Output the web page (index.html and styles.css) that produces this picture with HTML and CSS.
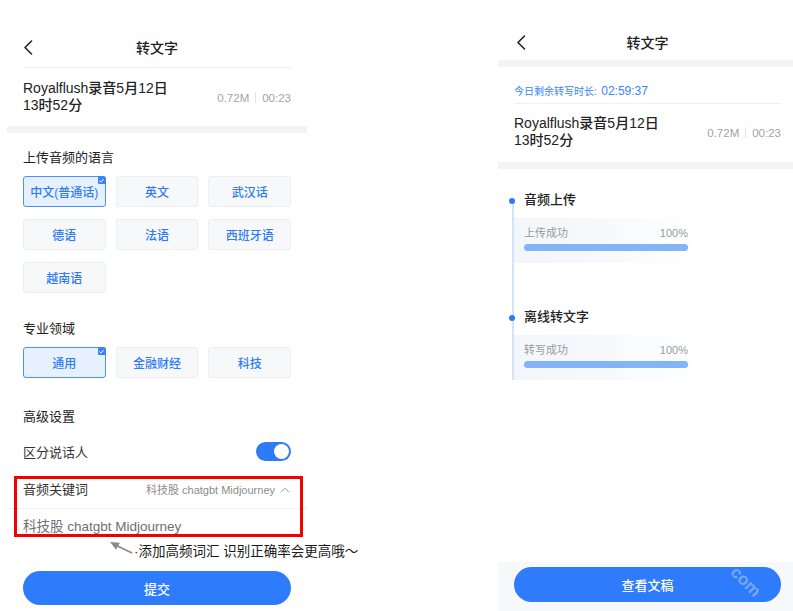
FILE: index.html
```html
<!DOCTYPE html>
<html lang="zh-CN">
<head>
<meta charset="utf-8">
<title>转文字</title>
<link rel="stylesheet" href="styles.css">
</head>
<body>
<div class="screens">
  <div class="phone phone-left">
    <header class="nav nav-left">
      <svg class="back" width="10" height="15" viewBox="0 0 10 15"><path d="M8.5 1 L2 7.5 L8.5 14" fill="none" stroke="#222" stroke-width="1.6" stroke-linecap="round" stroke-linejoin="round"/></svg>
      <span class="nav-title">转文字</span>
    </header>
    <div class="file">
      <div class="file-name">Royalflush录音5月12日<br>13时52分</div>
      <div class="file-meta"><span>0.72M</span><i class="sep"></i><span>00:23</span></div>
    </div>
    <div class="band"></div>

    <section class="sec sec-lang">
      <h3 class="sec-title">上传音频的语言</h3>
      <div class="opts">
        <div class="opt opt-on">中文(普通话)<span class="tick"><svg width="7" height="7" viewBox="0 0 7 7"><path d="M1.3 3.6 L2.9 5 L5.7 2" fill="none" stroke="#fff" stroke-width="1"/></svg></span></div>
        <div class="opt">英文</div>
        <div class="opt">武汉话</div>
        <div class="opt">德语</div>
        <div class="opt">法语</div>
        <div class="opt">西班牙语</div>
        <div class="opt">越南语</div>
      </div>
    </section>

    <section class="sec sec-domain">
      <h3 class="sec-title">专业领域</h3>
      <div class="opts">
        <div class="opt opt-on">通用<span class="tick"><svg width="7" height="7" viewBox="0 0 7 7"><path d="M1.3 3.6 L2.9 5 L5.7 2" fill="none" stroke="#fff" stroke-width="1"/></svg></span></div>
        <div class="opt">金融财经</div>
        <div class="opt">科技</div>
      </div>
    </section>

    <section class="sec sec-adv">
      <h3 class="sec-title">高级设置</h3>
      <div class="row-switch">
        <span>区分说话人</span>
        <span class="switch"><span class="knob"></span></span>
      </div>
    </section>

    <div class="keywords">
      <div class="kw-head">
        <span class="kw-label">音频关键词</span>
        <span class="kw-value">科技股 chatgbt Midjourney
          <svg class="caret" width="10" height="6" viewBox="0 0 10 6"><path d="M1 5.2 L5 1.2 L9 5.2" fill="none" stroke="#9a9a9a" stroke-width="1"/></svg>
        </span>
      </div>
      <div class="kw-input">科技股 chatgbt Midjourney</div>
      <div class="highlight"></div>
    </div>

    <div class="tip">
      <svg class="tip-arrow" width="26" height="14" viewBox="0 0 26 14"><path d="M9 5.7 L24 13" stroke="#8a8a8a" stroke-width="1.6"/><polygon points="2,2 11.9,2.7 8.1,9.7" fill="#8a8a8a"/></svg>
      <span class="tip-text">·添加高频词汇 识别正确率会更高哦～</span>
    </div>

    <button class="btn-primary btn-submit">提交</button>
  </div>

  <div class="phone phone-right">
    <header class="nav nav-right">
      <svg class="back" width="10" height="15" viewBox="0 0 10 15"><path d="M8.5 1 L2 7.5 L8.5 14" fill="none" stroke="#222" stroke-width="1.6" stroke-linecap="round" stroke-linejoin="round"/></svg>
      <span class="nav-title">转文字</span>
    </header>
    <div class="band"></div>
    <div class="quota"><span class="q-label">今日剩余转写时长:</span> <span class="q-time">02:59:37</span></div>
    <div class="file file-r">
      <div class="file-name">Royalflush录音5月12日<br>13时52分</div>
      <div class="file-meta"><span>0.72M</span><i class="sep"></i><span>00:23</span></div>
    </div>
    <div class="band"></div>

    <div class="timeline">
      <div class="step">
        <div class="step-title">音频上传</div>
        <div class="step-card">
          <div class="step-info"><span>上传成功</span><span>100%</span></div>
          <div class="bar"><div class="bar-fill" style="width:100%"></div></div>
        </div>
      </div>
      <div class="step step-2">
        <div class="step-title">离线转文字</div>
        <div class="step-card">
          <div class="step-info"><span>转写成功</span><span>100%</span></div>
          <div class="bar"><div class="bar-fill" style="width:100%"></div></div>
        </div>
      </div>
    </div>

    <footer class="footer">
      <button class="btn-primary btn-view">查看文稿<span class="watermark">com</span></button>
    </footer>
  </div>
</div>
</body>
</html>
```

FILE: styles.css
```css
* { box-sizing: border-box; }
html, body { margin: 0; padding: 0; background: #fff; }
body {
  width: 793px;
  height: 611px;
  overflow: hidden;
  font-family: "Liberation Sans", "Noto Sans CJK SC", sans-serif;
  color: #222;
}
.screens {
  display: flex;
  align-items: flex-start;
}
.phone {
  display: flex;
  flex-direction: column;
  height: 611px;
}
.phone-left {
  width: 300px;
  margin-left: 7px;
}
.phone-right {
  width: 295px;
  margin-left: 191px;
}

/* nav */
.nav {
  position: relative;
  display: flex;
  align-items: center;
  justify-content: center;
}
.nav .back {
  position: absolute;
  left: 0;
  top: 50%;
  margin-top: -7px;
}
.nav-title {
  font-size: 14px;
  font-weight: 500;
  color: #222;
}
.nav-left {
  margin: 26px 16px 0;
  height: 42px;
  border-bottom: 1px solid #f0f0f0;
}
.nav-right {
  margin: 23px 12px 0 16px;
  height: 37px;
}
.nav-right .back { left: 2px; }

/* file row */
.file {
  display: flex;
  align-items: center;
  justify-content: space-between;
  padding: 12px 16px 12px;
}
.file-name {
  font-size: 14px;
  line-height: 17px;
  color: #222;
  font-weight: 500;
}
.file-meta {
  display: flex;
  align-items: center;
  font-size: 11.5px;
  color: #a3a3a3;
  padding-top: 1px;
}
.file-meta .sep {
  display: inline-block;
  width: 1px;
  height: 11px;
  background: #e3e3e3;
  margin: 0 6px;
}
.file-r {
  padding: 11px 12px 13px 16px;
}
.band {
  height: 7px;
  background: #f4f4f4;
}

/* sections */
.sec { padding: 0 16px; }
.sec-title {
  margin: 0 0 9px;
  font-size: 13px;
  line-height: 18px;
  font-weight: 400;
  color: #222;
}
.sec-lang { padding-top: 16px; }
.sec-domain { padding-top: 27px; }
.sec-adv { padding-top: 30px; }
.sec-adv .sec-title { margin-bottom: 13px; }

.opts {
  display: grid;
  grid-template-columns: repeat(3, 1fr);
  column-gap: 10px;
  row-gap: 12px;
}
.opt {
  position: relative;
  height: 31px;
  display: flex;
  align-items: center;
  justify-content: center;
  background: #f7f8fa;
  border: 1px solid #eceef1;
  border-radius: 3px;
  font-size: 12px;
  font-weight: 500;
  color: #2f7bf5;
}
.opt-on {
  background: #e7f0fe;
  border-color: #4d8ff7;
}
.tick {
  position: absolute;
  top: -1px;
  right: -1px;
  width: 8px;
  height: 8px;
  background: #3a84f6;
  border-radius: 0 3px 0 1px;
  display: flex;
  align-items: center;
  justify-content: center;
}

.row-switch {
  display: flex;
  align-items: center;
  justify-content: space-between;
  height: 24px;
  font-size: 13px;
  color: #333;
}
.switch {
  position: relative;
  width: 35px;
  height: 19px;
  border-radius: 10px;
  background: #2f7bf6;
}
.knob {
  position: absolute;
  right: 2px;
  top: 2px;
  width: 15px;
  height: 15px;
  border-radius: 50%;
  background: #fff;
}

/* keywords */
.keywords {
  position: relative;
  margin-top: 14px;
}
.kw-head {
  display: flex;
  justify-content: space-between;
  align-items: flex-start;
  height: 32px;
  padding: 4px 16px 0;
  border-bottom: 1px solid #f2f2f2;
}
.kw-label {
  font-size: 13px;
  line-height: 18px;
  color: #333;
}
.kw-value {
  display: flex;
  align-items: center;
  font-size: 11px;
  line-height: 18px;
  color: #8c8c8c;
}
.caret { margin-left: 5px; margin-right: 1px; }
.kw-input {
  padding: 9px 16px 0;
  height: 27px;
  font-size: 13.5px;
  line-height: 18px;
  color: #707070;
}
.highlight {
  position: absolute;
  left: 7px;
  right: 4px;
  top: -1px;
  bottom: -1px;
  border: 3px solid #f40000;
}

/* tip */
.tip {
  display: flex;
  align-items: flex-start;
  margin-top: 7px;
  padding-left: 101px;
  height: 18px;
  white-space: nowrap;
}
.tip-arrow { margin-top: -3px; flex-shrink: 0; }
.tip-text {
  font-size: 13.5px;
  line-height: 18px;
  color: #1a1a1a;
}

.btn-primary {
  position: relative;
  display: flex;
  align-items: center;
  justify-content: center;
  border: 0;
  border-radius: 18px;
  background: #2e7bfb;
  color: #fff;
  font-family: inherit;
  font-size: 13px;
  font-weight: 500;
}
.btn-submit {
  margin: 10px 16px 0;
  height: 34px;
}

/* right panel */
.quota {
  margin: 0 12px 0 16px;
  padding: 15px 0 5px;
  border-bottom: 1px solid #f0f0f0;
  color: #3a86f6;
  line-height: 16px;
  height: 37px;
}
.q-label { font-size: 10px; }
.q-time { font-size: 12px; }

.timeline {
  position: relative;
  margin: 22px 0 0 14px;
  padding-left: 2px;
}
.timeline::before {
  content: "";
  position: absolute;
  left: 0;
  top: 9px;
  bottom: 0;
  width: 2px;
  background: #d3e3fc;
}
.step-title {
  position: relative;
  padding-left: 10px;
  font-size: 13px;
  line-height: 18px;
  font-weight: 500;
  color: #222;
}
.step-title::before {
  content: "";
  position: absolute;
  left: -5px;
  top: 6.5px;
  width: 6px;
  height: 6px;
  border-radius: 50%;
  background: #2f7bf6;
}
.step-2 { margin-top: 45px; }
.step-card {
  margin-top: 9px;
  width: 183px;
  height: 45px;
  padding: 8px 9px 0 10px;
  background: linear-gradient(90deg, #f3f6fa 0%, #f8fafc 60%, #ffffff 100%);
}
.step-info {
  display: flex;
  justify-content: space-between;
  font-size: 11px;
  line-height: 14px;
  color: #9a9a9a;
}
.bar {
  margin-top: 4px;
  height: 7px;
  border-radius: 4px;
  background: #e3edfd;
}
.bar-fill {
  height: 7px;
  border-radius: 4px;
  background: #84b4f8;
}

.footer {
  margin-top: auto;
  height: 49px;
  padding: 5px 12px 0 16px;
  background: #f7f8fa;
}
.btn-view {
  width: 100%;
  height: 35px;
  font-size: 13px;
}
.watermark {
  position: absolute;
  left: 214px;
  top: 5px;
  transform: rotate(45deg);
  font-size: 17px;
  line-height: 20px;
  font-weight: 700;
  color: rgba(255, 255, 255, 0.35);
}
```
